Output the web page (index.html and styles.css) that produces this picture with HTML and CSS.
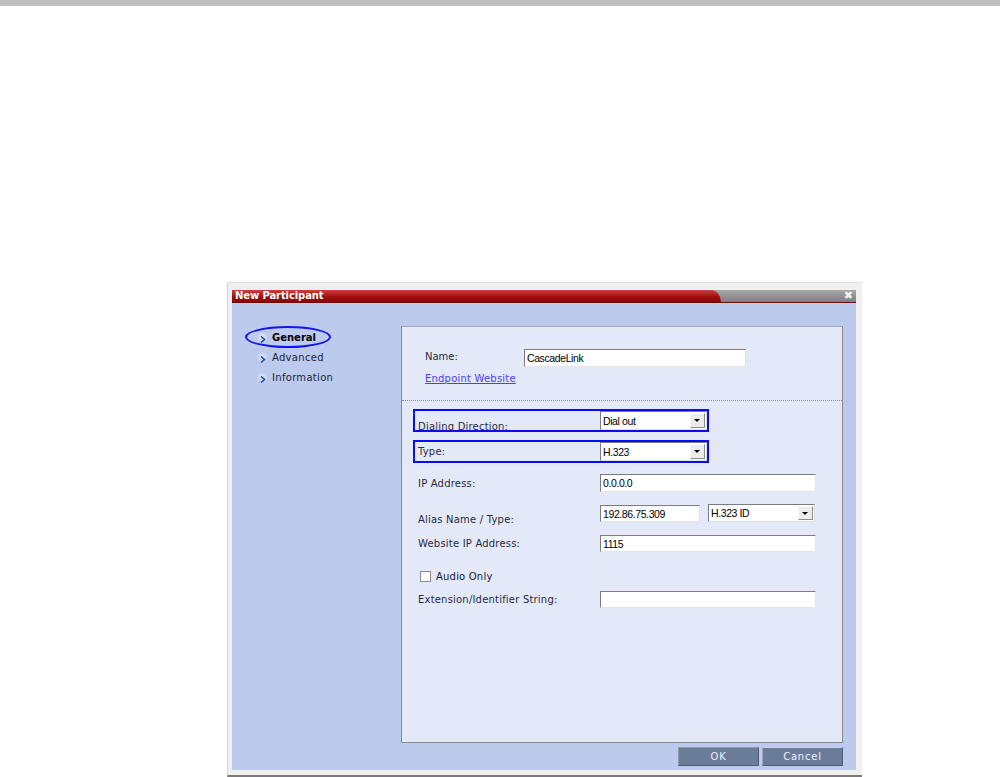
FILE: index.html
```html
<!DOCTYPE html>
<html lang="en">
<head>
  <meta charset="UTF-8">
  <title>New Participant</title>
  <link rel="stylesheet" href="styles.css">
</head>
<body>
  <div class="topbar"></div>

  <div class="dialog">
    <div class="window">
      <div class="titlebar">
        <div class="title-tab">New Participant</div>
        <span class="close">&#10006;</span>
      </div>

      <div class="content">
        <div class="main">
          <nav class="sidebar">
            <span class="ring"></span>
            <a class="nav-item active"><span class="chev"><svg width="6" height="7" viewBox="0 0 6 7"><path d="M1 0.5 L4.5 3.5 L1 6.5" fill="none" stroke="#2a4aa8" stroke-width="1.6"/></svg></span>General</a>
            <a class="nav-item"><span class="chev"><svg width="6" height="7" viewBox="0 0 6 7"><path d="M1 0.5 L4.5 3.5 L1 6.5" fill="none" stroke="#2a4aa8" stroke-width="1.6"/></svg></span>Advanced</a>
            <a class="nav-item"><span class="chev"><svg width="6" height="7" viewBox="0 0 6 7"><path d="M1 0.5 L4.5 3.5 L1 6.5" fill="none" stroke="#2a4aa8" stroke-width="1.6"/></svg></span>Information</a>
          </nav>

          <div class="panel">
            <div class="name-row">
              <label class="name-label">Name:</label>
              <div class="input name-input">CascadeLink</div>
            </div>
            <a class="link">Endpoint Website</a>
            <div class="separator"></div>

            <div class="hl-box">
              <label class="box-label low">Dialing Direction:</label>
              <div class="select"><span class="val">Dial out</span><span class="arrow"></span></div>
            </div>
            <div class="hl-box second">
              <label class="box-label">Type:</label>
              <div class="select"><span class="val">H.323</span><span class="arrow"></span></div>
            </div>

            <div class="row ip-row">
              <label>IP Address:</label>
              <div class="input wide">0.0.0.0</div>
            </div>
            <div class="row alias-row">
              <label class="low">Alias Name / Type:</label>
              <div class="input short">192.86.75.309</div>
              <div class="select alias-select"><span class="val">H.323 ID</span><span class="arrow"></span></div>
            </div>
            <div class="row web-row">
              <label>Website IP Address:</label>
              <div class="input wide">1115</div>
            </div>
            <div class="check-row">
              <span class="checkbox"></span>
              <span>Audio Only</span>
            </div>
            <div class="row ext-row">
              <label>Extension/Identifier String:</label>
              <div class="input wide"></div>
            </div>
          </div>
        </div>

        <div class="buttons">
          <button class="btn ok">OK</button>
          <button class="btn">Cancel</button>
        </div>
      </div>
    </div>
  </div>
</body>
</html>
```

FILE: styles.css
```css
body {
  margin: 0;
  background-color: #fff;
  font-family: "DejaVu Sans", Verdana, sans-serif;
  font-size: 10px;
}
.topbar {
  height: 6px;
  background-color: #bfbfbf;
}
.dialog {
  box-sizing: border-box;
  width: 635px;
  height: 495px;
  margin: 276px 0 0 227px;
  background-color: #f0f0f0;
  border-top: 1px solid #dedede;
  border-left: 1px solid #d4d4d4;
  border-bottom: 2px solid #7a7a7a;
  padding: 7px 6px 5px 4px;
}
.window {
  display: flex;
  flex-direction: column;
  height: 100%;
}
.titlebar {
  position: relative;
  height: 12px;
  border-bottom: 1px solid #6e0a0a;
  background: linear-gradient(#a8a8a8, #7e7e7e);
  display: flex;
}
.title-tab {
  width: 486px;
  height: 12px;
  padding-left: 3px;
  background: linear-gradient(#d04040, #a01010 55%, #8a0606);
  border-top-right-radius: 10px 12px;
  color: #fff;
  font-weight: bold;
  font-size: 10px;
  line-height: 12px;
  letter-spacing: -0.1px;
}
.close {
  margin-left: auto;
  margin-right: 3px;
  color: #f4f4f4;
  font-size: 11px;
  line-height: 12px;
  font-weight: bold;
}
.content {
  flex: 1;
  background-color: #bccbed;
  padding: 23px 13px 4px 0;
  display: flex;
  flex-direction: column;
}
.main {
  display: flex;
}
.sidebar {
  position: relative;
  width: 169px;
  padding-top: 1px;
  display: flex;
  flex-direction: column;
}
.ring {
  position: absolute;
  left: 13px;
  top: 0;
  width: 82px;
  height: 18px;
  border: 2px solid #1414f0;
  border-radius: 50%;
}
.nav-item {
  display: flex;
  align-items: center;
  height: 20px;
  padding-left: 25px;
  color: #1e1e3c;
  letter-spacing: 0.3px;
}
.nav-item.active {
  font-weight: bold;
  color: #000;
  letter-spacing: 0;
}
.chev {
  width: 11px;
  height: 11px;
  margin-right: 4px;
  display: flex;
  align-items: flex-end;
  justify-content: center;
  background: radial-gradient(circle, #d6e0f6 30%, transparent 72%);
}
.panel {
  box-sizing: border-box;
  width: 442px;
  height: 417px;
  background-color: #e3e9f8;
  border: 1px solid #8a8a8a;
  border-top-color: #a8a8b0;
  color: #2a2a40;
}
.name-row {
  display: flex;
  align-items: center;
  margin-top: 22px;
  padding-left: 23px;
}
.name-label {
  width: 99px;
  margin-top: -4px;
}
.input {
  box-sizing: border-box;
  height: 18px;
  background-color: #fff;
  border: 1px solid #e4e4e4;
  border-top-color: #7c7c7c;
  border-left-color: #7c7c7c;
  font-family: "Liberation Sans", Arial, sans-serif;
  font-size: 10.5px;
  letter-spacing: -0.4px;
  color: #000;
  line-height: 16px;
  padding-left: 2px;
}
.name-input {
  width: 222px;
}
.link {
  display: block;
  margin: 6px 0 0 23px;
  color: #4b3cff;
  text-decoration: underline;
  line-height: 12px;
  letter-spacing: 0.2px;
}
.separator {
  margin-top: 15px;
  border-top: 1px dotted #7e88a8;
}
.hl-box {
  box-sizing: border-box;
  display: flex;
  align-items: center;
  width: 296px;
  height: 23px;
  margin: 8px 0 0 11px;
  border: 2px solid #0a0af5;
}
.hl-box.second {
  margin-top: 8px;
}
.box-label {
  width: 182px;
  padding-left: 3px;
  letter-spacing: 0.2px;
}
.box-label.low {
  align-self: flex-end;
  margin-bottom: -2px;
}
.select {
  box-sizing: border-box;
  display: flex;
  align-items: center;
  width: 107px;
  height: 19px;
  background-color: #fff;
  border: 1px solid #e0e0e0;
  border-top-color: #7c7c7c;
  border-left-color: #7c7c7c;
  font-family: "Liberation Sans", Arial, sans-serif;
  font-size: 10.5px;
  letter-spacing: -0.4px;
  color: #000;
}
.val {
  flex: 1;
  padding-left: 2px;
}
.arrow {
  position: relative;
  width: 15px;
  height: 15px;
  margin-right: 1px;
  background-color: #ececec;
  border: 1px solid #fff;
  border-right-color: #8c8c8c;
  border-bottom-color: #8c8c8c;
  box-sizing: border-box;
}
.arrow::after {
  content: "";
  position: absolute;
  left: 3px;
  top: 5px;
  border-left: 3.5px solid transparent;
  border-right: 3.5px solid transparent;
  border-top: 3px solid #000;
}
.row {
  display: flex;
  align-items: center;
  padding-left: 16px;
}
.row label {
  width: 182px;
  letter-spacing: 0.2px;
}
.row label.low {
  align-self: flex-end;
  margin-bottom: -3px;
}
.wide {
  width: 216px;
}
.short {
  width: 100px;
  height: 17px;
  margin-right: 8px;
}
.alias-select {
  height: 18px;
}
.alias-select .arrow {
  height: 14px;
}
.ip-row {
  margin-top: 11px;
}
.alias-row {
  margin-top: 12px;
}
.web-row {
  margin-top: 13px;
}
.web-row .input,
.ext-row .input {
  height: 17px;
}
.check-row {
  display: flex;
  align-items: center;
  margin-top: 18px;
  padding-left: 18px;
  height: 12px;
  color: #1a1a30;
  letter-spacing: 0.2px;
}
.checkbox {
  box-sizing: border-box;
  width: 11px;
  height: 11px;
  margin-right: 5px;
  background-color: #fff;
  border: 1px solid #8a8a8a;
}
.ext-row {
  margin-top: 9px;
}
.buttons {
  display: flex;
  justify-content: flex-end;
  gap: 3px;
  margin-top: 4px;
}
.btn {
  box-sizing: border-box;
  width: 81px;
  height: 19px;
  padding: 0;
  background-color: #6b7c9b;
  color: #eef1f8;
  font-family: "DejaVu Sans", Verdana, sans-serif;
  font-size: 10px;
  letter-spacing: 0.8px;
  border: 1px solid #4e5c78;
  border-top-color: #c8d0e0;
  border-left-color: #a0a8b8;
}
.btn.ok {
  border-top-color: #8e98ac;
  border-left-color: #8e98ac;
}
```
